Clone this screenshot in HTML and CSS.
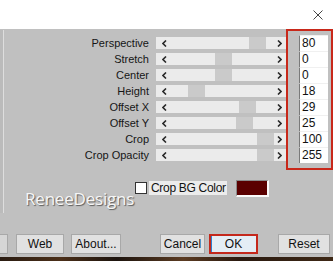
FILE: index.html
```html
<!DOCTYPE html>
<html>
<head>
<meta charset="utf-8">
<link rel="stylesheet" href="styles.css">
</head>
<body>
<div class="titlebar">
  <svg class="close" width="10" height="10" viewBox="0 0 10 10"><path d="M0.5 0.5L9.5 9.5M9.5 0.5L0.5 9.5" stroke="#444" stroke-width="1" fill="none"/></svg>
</div>
<div class="dialog">
  <div class="upper">
    <div class="leftpane"></div>
    <div class="content">
      <div class="rows">
        <div class="row"><span class="label">Perspective</span><div class="scroll"><svg class="arr" width="5" height="7" viewBox="0 0 5 7"><path d="M4 0.5L1 3.5L4 6.5" stroke="#2a2a2a" stroke-width="1.6" fill="none"/></svg><span class="thumb" style="left:93px"></span><svg class="arr" width="5" height="7" viewBox="0 0 5 7"><path d="M1 0.5L4 3.5L1 6.5" stroke="#2a2a2a" stroke-width="1.6" fill="none"/></svg></div><div class="field">80</div></div>
        <div class="row"><span class="label">Stretch</span><div class="scroll"><svg class="arr" width="5" height="7" viewBox="0 0 5 7"><path d="M4 0.5L1 3.5L4 6.5" stroke="#2a2a2a" stroke-width="1.6" fill="none"/></svg><span class="thumb" style="left:59px"></span><svg class="arr" width="5" height="7" viewBox="0 0 5 7"><path d="M1 0.5L4 3.5L1 6.5" stroke="#2a2a2a" stroke-width="1.6" fill="none"/></svg></div><div class="field">0</div></div>
        <div class="row"><span class="label">Center</span><div class="scroll"><svg class="arr" width="5" height="7" viewBox="0 0 5 7"><path d="M4 0.5L1 3.5L4 6.5" stroke="#2a2a2a" stroke-width="1.6" fill="none"/></svg><span class="thumb" style="left:59px"></span><svg class="arr" width="5" height="7" viewBox="0 0 5 7"><path d="M1 0.5L4 3.5L1 6.5" stroke="#2a2a2a" stroke-width="1.6" fill="none"/></svg></div><div class="field">0</div></div>
        <div class="row"><span class="label">Height</span><div class="scroll"><svg class="arr" width="5" height="7" viewBox="0 0 5 7"><path d="M4 0.5L1 3.5L4 6.5" stroke="#2a2a2a" stroke-width="1.6" fill="none"/></svg><span class="thumb" style="left:32px"></span><svg class="arr" width="5" height="7" viewBox="0 0 5 7"><path d="M1 0.5L4 3.5L1 6.5" stroke="#2a2a2a" stroke-width="1.6" fill="none"/></svg></div><div class="field">18</div></div>
        <div class="row"><span class="label">Offset X</span><div class="scroll"><svg class="arr" width="5" height="7" viewBox="0 0 5 7"><path d="M4 0.5L1 3.5L4 6.5" stroke="#2a2a2a" stroke-width="1.6" fill="none"/></svg><span class="thumb" style="left:83px"></span><svg class="arr" width="5" height="7" viewBox="0 0 5 7"><path d="M1 0.5L4 3.5L1 6.5" stroke="#2a2a2a" stroke-width="1.6" fill="none"/></svg></div><div class="field">29</div></div>
        <div class="row"><span class="label">Offset Y</span><div class="scroll"><svg class="arr" width="5" height="7" viewBox="0 0 5 7"><path d="M4 0.5L1 3.5L4 6.5" stroke="#2a2a2a" stroke-width="1.6" fill="none"/></svg><span class="thumb" style="left:80px"></span><svg class="arr" width="5" height="7" viewBox="0 0 5 7"><path d="M1 0.5L4 3.5L1 6.5" stroke="#2a2a2a" stroke-width="1.6" fill="none"/></svg></div><div class="field">25</div></div>
        <div class="row"><span class="label">Crop</span><div class="scroll"><svg class="arr" width="5" height="7" viewBox="0 0 5 7"><path d="M4 0.5L1 3.5L4 6.5" stroke="#2a2a2a" stroke-width="1.6" fill="none"/></svg><span class="thumb" style="left:101px"></span><svg class="arr" width="5" height="7" viewBox="0 0 5 7"><path d="M1 0.5L4 3.5L1 6.5" stroke="#2a2a2a" stroke-width="1.6" fill="none"/></svg></div><div class="field">100</div></div>
        <div class="row"><span class="label">Crop Opacity</span><div class="scroll"><svg class="arr" width="5" height="7" viewBox="0 0 5 7"><path d="M4 0.5L1 3.5L4 6.5" stroke="#2a2a2a" stroke-width="1.6" fill="none"/></svg><span class="thumb" style="left:101px"></span><svg class="arr" width="5" height="7" viewBox="0 0 5 7"><path d="M1 0.5L4 3.5L1 6.5" stroke="#2a2a2a" stroke-width="1.6" fill="none"/></svg></div><div class="field">255</div></div>
      </div>
      <div class="middle">
        <div class="brand">ReneeDesigns</div>
        <div class="checkgroup">
          <span class="checkbox"></span>
          <span class="checklabel">Crop BG Color</span>
          <span class="swatch"></span>
        </div>
      </div>
    </div>
  </div>
  <div class="buttons">
    <div class="btn partial"></div>
    <div class="btn web">Web</div>
    <div class="btn about">About...</div>
    <div class="btn cancel">Cancel</div>
    <div class="btn ok">OK</div>
    <div class="btn reset">Reset</div>
  </div>
  <div class="highlight"></div>
</div>
<div class="desk"></div>
</body>
</html>
```

FILE: styles.css
```css
html, body {
  margin: 0;
  padding: 0;
}
body {
  width: 333px;
  height: 261px;
  overflow: hidden;
  background: #c0c0c0;
  font-family: "Liberation Sans", Arial, sans-serif;
  font-size: 11px;
  color: #111;
}
.titlebar {
  height: 29px;
  background: #ffffff;
  display: flex;
  justify-content: flex-end;
  align-items: center;
  padding-right: 10px;
}
.close {
  display: block;
  margin-top: 1px;
}
.dialog {
  position: relative;
  height: 228px;
  background: #c0c0c0;
}
.upper {
  display: flex;
  height: 185px;
}
.leftpane {
  width: 3px;
  height: 183px;
  margin-top: 1px;
  background: #bbbbbb;
  border-right: 1px solid #dedede;
}
.content {
  flex: 1;
  padding-top: 6px;
}
.row {
  display: flex;
  align-items: center;
  height: 16px;
}
.label {
  width: 145px;
  text-align: right;
  color: #151515;
  line-height: 16px;
}
.scroll {
  position: relative;
  margin-left: 7px;
  width: 130px;
  height: 12px;
  background: #ebebeb;
  display: flex;
  align-items: center;
  justify-content: space-between;
  padding: 0 4px 0 6px;
  box-sizing: border-box;
}
.arr {
  position: relative;
  z-index: 1;
  display: block;
}
.thumb {
  position: absolute;
  top: 0;
  width: 17px;
  height: 12px;
  background: #cacaca;
}
.field {
  margin-left: 13px;
  width: 29px;
  height: 16px;
  background: #ffffff;
  box-sizing: border-box;
  border-left: 1px solid #7a7a7a;
  border-top: 1px solid #f0f0f0;
  padding-left: 2px;
  font-size: 12px;
  line-height: 15px;
  color: #111;
}
.middle {
  display: flex;
  margin-top: 17px;
  height: 30px;
}
.brand {
  width: 131px;
  box-sizing: border-box;
  padding-left: 21px;
  margin-top: 9px;
  font-family: "Open Sans", sans-serif;
  font-size: 17px;
  line-height: 20px;
  letter-spacing: -0.2px;
  color: #f6f6f6;
  text-shadow: 1px 1px 1px #5a5a5a;
  white-space: nowrap;
}
.checkgroup {
  display: flex;
  align-items: flex-start;
}
.checkbox {
  width: 12px;
  height: 12px;
  margin-top: 2px;
  box-sizing: border-box;
  border: 1px solid #333;
  background: #fff;
}
.checklabel {
  margin-left: 2px;
  margin-top: 1px;
  width: 78px;
  height: 14px;
  box-sizing: border-box;
  padding-left: 2px;
  background: #ececec;
  font-size: 12px;
  line-height: 14px;
  letter-spacing: -0.3px;
  white-space: nowrap;
  overflow: hidden;
  color: #111;
}
.swatch {
  margin-left: 9px;
  width: 33px;
  height: 17px;
  box-sizing: border-box;
  background: #5a0000;
  border-top: 1px solid #8a8a8a;
  border-left: 1px solid #8a8a8a;
  border-right: 2px solid #fafafa;
  border-bottom: 2px solid #fafafa;
}
.buttons {
  display: flex;
  margin-top: 20px;
  height: 20px;
}
.btn {
  height: 20px;
  box-sizing: border-box;
  background: #e1e1e1;
  border: 1px solid #a8a8a8;
  font-size: 12px;
  line-height: 18px;
  text-align: center;
  color: #111;
}
.partial {
  width: 9px;
  margin-left: -1px;
  background: #d6d6d6;
}
.web {
  margin-left: 8px;
  width: 48px;
}
.about {
  margin-left: 7px;
  width: 50px;
}
.cancel {
  margin-left: 39px;
  width: 45px;
}
.ok {
  margin-left: 4px;
  width: 49px;
  border: 2px solid #c4281c;
  box-shadow: inset 1px 0 0 #2f7fd0;
  background: #e4edf5;
  line-height: 16px;
}
.reset {
  margin-left: 20px;
  width: 52px;
}
.highlight {
  position: absolute;
  left: 286px;
  top: 0;
  width: 47px;
  height: 141px;
  box-sizing: border-box;
  border: 2px solid #c8281a;
  pointer-events: none;
}
.desk {
  height: 4px;
  background: linear-gradient(90deg, #2a1c12 0%, #4b2f19 18%, #1d140e 35%, #5b3b22 55%, #2a1a10 72%, #3e2816 100%);
}
```
